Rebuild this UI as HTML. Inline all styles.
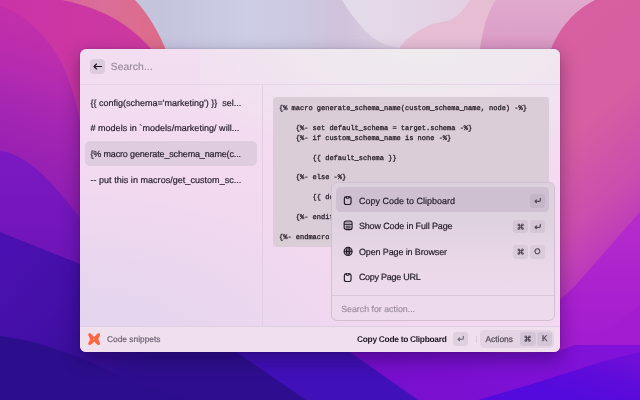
<!DOCTYPE html>
<html>
<head>
<meta charset="utf-8">
<style>
*{box-sizing:border-box;margin:0;padding:0}
html,body{width:640px;height:400px;overflow:hidden;background:#7a18c0}
body{font-family:"Liberation Sans",sans-serif;position:relative;text-rendering:geometricPrecision}
#bg{position:absolute;left:0;top:0;width:640px;height:400px}
#shadow{position:absolute;left:80px;top:49px;width:480px;height:303px;border-radius:6px;box-shadow:0 7px 18px 1px rgba(20,0,50,.36),0 0 2px rgba(20,0,50,.2)}
#win{filter:opacity(1);position:absolute;left:80px;top:49px;width:480px;height:303px;border-radius:6px;overflow:hidden;
 background:radial-gradient(ellipse 400px 230px at 0% 100%,rgba(226,212,238,1) 0%,rgba(230,213,238,.85) 35%,rgba(238,216,239,.4) 70%,rgba(243,218,240,0) 100%),linear-gradient(180deg,#f2def0 0%,#f3daf0 40%,#f3d9ef 100%)}
#rightwash{position:absolute;left:120px;top:0;width:360px;height:120px;background:radial-gradient(ellipse 260px 110px at 62% 0%,rgba(238,236,238,.95) 0%,rgba(238,236,238,.6) 50%,rgba(238,236,238,0) 100%)}
#hdr{position:absolute;left:0;top:0;width:480px;height:35px}
#hsep{position:absolute;left:0;top:35px;width:480px;height:1px;background:#e6d4e6}
#back{position:absolute;left:10px;top:10px;width:15px;height:15px;border-radius:4px;background:#dccbdc}
#back svg{position:absolute;left:0;top:0}
#search{-webkit-text-stroke:0.15px #978899;letter-spacing:0.08px;position:absolute;left:30.8px;top:12.4px;font-size:10.3px;line-height:13px;color:#978899;white-space:nowrap}
.li{-webkit-text-stroke:0.2px #2a2030;position:absolute;left:10.4px;font-size:9px;line-height:12px;color:#2a2030;white-space:nowrap}
#sel{position:absolute;left:5.4px;top:92.2px;width:171.6px;height:24.8px;border-radius:5px;background:#dfcddf}
#vsep{position:absolute;left:182px;top:36px;width:1px;height:241px;background:#e2d0e2}
#code{position:absolute;left:193px;top:48px;width:276px;height:150px;border-radius:3px;background:#dacdd8}
#code pre{position:absolute;left:6px;font-family:"Liberation Mono",monospace;font-size:7px;line-height:10px;color:#2a222c;-webkit-text-stroke:0.3px #2a222c}
#fsep{position:absolute;left:0;top:277px;width:480px;height:1px;background:#e0cfe4}
#foot{position:absolute;left:0;top:278px;width:480px;height:25px;background:#f0e0ee}
#dbt{position:absolute;left:7.6px;top:5.75px}
#ftitle{-webkit-text-stroke:0.2px #6e6272;position:absolute;left:27px;top:6.9px;font-size:8.4px;line-height:11px;color:#6e6272;white-space:nowrap}
#fact{position:absolute;left:277px;top:6.9px;font-size:8.4px;letter-spacing:-0.288px;line-height:11px;color:#1e1822;font-weight:bold;white-space:nowrap}
#fdiv{position:absolute;left:396.3px;top:9.2px;width:1px;height:6.6px;background:#d9c9da}
#abtn{position:absolute;left:400px;top:3.1px;width:74.4px;height:17.7px;border-radius:4.5px;background:#e3d3e3}
#atext{-webkit-text-stroke:0.25px #5a4f5e;position:absolute;left:405.5px;top:6.9px;font-size:8.4px;line-height:11px;color:#5a4f5e;white-space:nowrap}
#pop{position:absolute;left:251px;top:133px;width:224px;height:139px;border-radius:6px;border:1px solid #cfbfd0;
 background:linear-gradient(180deg,#ded1de 0,#dfd2df 40px,#e5d5e5 62px,#ead8e9 82px,#eddaec 110px,#eddaec 100%)}
#psel{position:absolute;left:4.2px;top:4.1px;width:213.2px;height:25px;border-radius:4.5px;background:#cec0d0}
.pa{-webkit-text-stroke:0.2px #241c28;position:absolute;left:26.9px;font-size:9px;line-height:12px;color:#241c28;white-space:nowrap}
.pi{position:absolute;left:11.1px}
#psep{position:absolute;left:0;top:111.6px;width:221.5px;height:1px;background:#d9c8da}
#psearch{-webkit-text-stroke:0.15px #9a8b9d;position:absolute;left:9.2px;top:121px;font-size:8.8px;line-height:11px;color:#9a8b9d;white-space:nowrap}
.k{position:absolute;width:15.3px;height:13.4px;border-radius:3px;background:#d5c6d6}
#pop .k{height:13.8px}
#pop .k svg,#pop .k div{top:0.2px}
.k svg{position:absolute;left:0;top:0}
.pa,.li,#atext,.k div,#fact,#ftitle,#search,#psearch,#code pre{filter:opacity(1)}
</style>
</head>
<body>
<svg id="bg" viewBox="0 0 640 400">
<defs>
<linearGradient id="gtop" x1="0" y1="0" x2="1" y2="0">
 <stop offset="0.25" stop-color="#c5c4dd"/><stop offset="0.39" stop-color="#cdcde5"/><stop offset="0.47" stop-color="#cdc8e1"/><stop offset="0.535" stop-color="#d0c2db"/><stop offset="0.62" stop-color="#dccfe2"/><stop offset="0.75" stop-color="#e2b4d0"/><stop offset="0.85" stop-color="#dea6cb"/>
</linearGradient>
<linearGradient id="gleft" gradientUnits="userSpaceOnUse" x1="80" y1="0" x2="0" y2="240">
 <stop offset="0" stop-color="#c631a7"/><stop offset="0.2" stop-color="#bf2eab"/><stop offset="0.35" stop-color="#b32bb0"/><stop offset="0.5" stop-color="#a426b2"/><stop offset="0.75" stop-color="#921fb3"/><stop offset="1" stop-color="#8019b4"/>
</linearGradient>
<linearGradient id="gband2" x1="0" y1="0" x2="1" y2="0">
 <stop offset="0" stop-color="#ca33a7"/><stop offset="1" stop-color="#cd3a9e"/>
</linearGradient>
<linearGradient id="gband3" x1="0" y1="0" x2="1" y2="0">
 <stop offset="0.1" stop-color="#d25a9c"/><stop offset="0.6" stop-color="#da6e98"/><stop offset="1" stop-color="#de6b89"/>
</linearGradient>
<linearGradient id="gviolet" x1="0" y1="0" x2="0" y2="1">
 <stop offset="0" stop-color="#7c19c2"/><stop offset="1" stop-color="#6a13b4"/>
</linearGradient>
<linearGradient id="gindigo" x1="0" y1="0" x2="1" y2="0.25">
 <stop offset="0" stop-color="#4c10b2"/><stop offset="0.18" stop-color="#440fa8"/><stop offset="0.4" stop-color="#2e0e8e"/>
</linearGradient>
<linearGradient id="gpink" x1="0" y1="0" x2="0.25" y2="1">
 <stop offset="0" stop-color="#d8609f"/><stop offset="0.45" stop-color="#d65ea1"/><stop offset="0.72" stop-color="#cb4dae"/><stop offset="0.92" stop-color="#b835c0"/>
</linearGradient>
<linearGradient id="gmag" x1="0" y1="0" x2="0" y2="1">
 <stop offset="0" stop-color="#b62ccb"/><stop offset="0.5" stop-color="#a820cf"/><stop offset="1" stop-color="#9a16d2"/>
</linearGradient>
<linearGradient id="gblue" gradientUnits="userSpaceOnUse" x1="600" y1="352" x2="585" y2="400"><stop offset="0" stop-color="#6e0ed8"/><stop offset="0.45" stop-color="#5e0bdb"/><stop offset="1" stop-color="#540adc"/></linearGradient>
<linearGradient id="gbowl" gradientUnits="userSpaceOnUse" x1="345" y1="0" x2="470" y2="0"><stop offset="0" stop-color="#e2dbea"/><stop offset="0.4" stop-color="#e3d8e8"/><stop offset="1" stop-color="#e3cfe2"/></linearGradient>
<linearGradient id="glilac" gradientUnits="userSpaceOnUse" x1="0" y1="0" x2="0" y2="52"><stop offset="0" stop-color="#e0a9cd"/><stop offset="0.6" stop-color="#dda1c9"/><stop offset="1" stop-color="#d895c2"/></linearGradient>
<linearGradient id="gbot" x1="0" y1="0" x2="1" y2="0">
 <stop offset="0" stop-color="#760ecb"/><stop offset="1" stop-color="#8212da"/>
</linearGradient>
</defs>
<rect width="640" height="400" fill="url(#gtop)"/>
<!-- top: whitish bowl + pink hill -->
<path d="M342 0C348 10 354 18 360 25 368 34 375 40 382 43 390 46 395 47 402 48L402 60 470 60 471 0Z" fill="url(#gbowl)"/>
<path d="M400 60L400 47C403 43 406 40 410 37 416 32 422 28 430 25 438 22 444 22 450 20 456 18 463 11 470 0L640 0 640 60Z" fill="#e6bdd3"/>
<path d="M480 48C484 22 490 8 496 0L640 0 640 80 480 80Z" fill="url(#glilac)"/>
<!-- left magenta family -->
<path d="M0 0L135 0C148 14 158 30 168 55L170 300 0 300Z" fill="url(#gband3)" />
<path d="M0 0L62 0C100 8 128 22 152 50L160 300 0 300Z" fill="url(#gband2)"/>
<path d="M0 6C25 14 45 34 60 60 68 76 74 92 79 115L100 300 0 300Z" fill="url(#gleft)"/>
<path d="M0 151C14 152 32 163 50 182 62 195 74 210 90 230L90 300 0 300Z" fill="url(#gviolet)"/>
<path d="M0 232L90 268 640 330 640 400 0 400Z" fill="url(#gindigo)"/>
<!-- right pink circle -->
<path d="M595 0C575 10 558 28 549 55 545 70 545 90 548 110L548 330 640 330 640 0Z" fill="url(#gpink)"/>
<path d="M640 212L574 287 540 317 540 400 640 400Z" fill="url(#gmag)"/>
<!-- bottom -->
<path d="M226 345L306 400 640 400 640 345Z" fill="#4010b8"/>
<path d="M340 345L418 400 640 400 640 345Z" fill="url(#gbot)"/>
<path d="M640 305C620 322 600 336 562 350 545 354 500 352 440 352L440 345 640 345Z" fill="#a41cd0"/>
<path d="M640 352C625 356 610 359 598 363 570 372 540 382 478 400L640 400Z" fill="url(#gblue)"/>
<path d="M0 336C15 338 30 341 40 344 55 349 68 353 80 358 95 364 110 371 122 377 140 385 158 391 188 400L0 400Z" fill="#2c0e8c"/>
</svg>
<div id="shadow"></div>
<div id="win">
 <div id="rightwash"></div>
 <div id="hsep"></div>
 <div id="back"><svg width="15" height="15" viewBox="0 0 15 15"><path d="M11.6 7.5H4M6.5 5L4 7.5l2.5 2.5" fill="none" stroke="#1c1620" stroke-width="1.15" stroke-linecap="round" stroke-linejoin="round"/></svg></div>
 <div id="search">Search...</div>
 <div id="sel"></div>
 <div class="li" id="l1" style="top:47.5px">{{ config(schema='marketing') }}&nbsp; sel...</div>
 <div class="li" id="l2" style="top:73.3px;letter-spacing:0.038px">#&nbsp;models in `models/marketing/ will...</div>
 <div class="li" id="l3" style="top:99.1px;letter-spacing:-0.15px">{% macro generate_schema_name(c...</div>
 <div class="li" id="l4" style="top:124.9px;letter-spacing:0.038px">-- put this in macros/get_custom_sc...</div>
 <div id="vsep"></div>
 <div id="code"><pre style="top:7px">{% macro generate_schema_name(custom_schema_name, node) -%}

    {%- set default_schema = target.schema -%}
    {%- if custom_schema_name is none -%}

        {{ default_schema }}
</pre><pre style="top:76px">    {%- else -%}

        {{ default_schema }}_{{ custom_schema_name | trim }}

    {%- endif -%}

{%- endmacro %}</pre></div>
 <div id="fsep"></div>
 <div id="foot">
  <svg id="dbt" width="12.3" height="12.3" viewBox="0 0 12.3 12.3"><path d="M1.2 0.3C2.2 0.1 3.2 0.8 4.2 1.9L6.15 3.9 8.1 1.9C9.1 0.8 10.1 0.1 11.1 0.3 12.1 0.6 12.3 1.6 11.9 2.5 11.4 3.6 10.6 4.6 10.4 6.15 10.6 7.7 11.4 8.7 11.9 9.8 12.3 10.7 12.1 11.7 11.1 12 10.1 12.2 9.1 11.5 8.1 10.4L6.15 8.6 4.2 10.4C3.2 11.5 2.2 12.2 1.2 12 0.2 11.7 0 10.7 0.4 9.8 0.9 8.7 1.7 7.7 1.9 6.15 1.7 4.6 0.9 3.6 0.4 2.5 0 1.6 0.2 0.6 1.2 0.3Z" fill="#ff643c"/><circle cx="5.8" cy="6.25" r="0.65" fill="#f7cdd6"/></svg>
  <div id="ftitle">Code snippets</div>
  <div id="fact">Copy Code to Clipboard</div>
  <div class="k" style="left:373.1px;top:5.3px;background:#dfd0df"><svg width="15.3" height="13.4" viewBox="0 0 15.3 13.4"><path d="M10.3 4.3V6.5Q10.3 7.3 9.5 7.3H5.1M6.5 5.9L5 7.3 6.5 8.7" fill="none" stroke="#6a5e6e" stroke-width="1.05" stroke-linecap="round" stroke-linejoin="round"/></svg></div>
  <div id="fdiv"></div>
  <div id="abtn"></div>
  <div id="atext">Actions</div>
  <div class="k" style="left:440.3px;top:5.3px;background:#d3c5d5"><svg width="15.3" height="13.4" viewBox="0 0 15.3 13.4"><g transform="translate(4.7,3.75) scale(0.92)" fill="none" stroke="#4e4454" stroke-width="1.1"><path d="M2.1 2.1H4.3V4.3H2.1Z"/><path d="M2.1 2.1V1.25A0.9 0.9 0 1 0 1.2 2.1Z"/><path d="M4.3 2.1H5.2A0.9 0.9 0 1 0 4.3 1.25Z"/><path d="M4.3 4.3V5.2A0.9 0.9 0 1 0 5.2 4.3Z"/><path d="M2.1 4.3H1.2A0.9 0.9 0 1 0 2.1 5.2Z"/></g></svg></div>
  <div class="k" style="left:457px;top:5.3px;background:#d3c5d5"><div style="position:absolute;left:0;top:0;width:15.3px;height:13.4px;text-align:center;font-size:8px;line-height:14.4px;color:#52475a;-webkit-text-stroke:0.35px #52475a">K</div></div>
 </div>
 <div id="pop">
  <div id="psel"></div>
  <svg class="pi" style="top:12.0px" width="10" height="11" viewBox="0 0 10 11"><rect x="1.35" y="1.9" width="6.7" height="7.6" rx="1.7" fill="none" stroke="#1e1822" stroke-width="1.15"/><path d="M2.9 1H6.5V2.7Q6.5 3.7 5.5 3.7H3.9Q2.9 3.7 2.9 2.7Z" fill="#1e1822"/><circle cx="4.7" cy="2.2" r="0.7" fill="#cec0d0"/></svg>
  <svg class="pi" style="top:36.8px" width="10" height="11" viewBox="0 0 10 11"><rect x="1.15" y="1.15" width="7.9" height="8.4" rx="2" fill="none" stroke="#1e1822" stroke-width="1.15"/><path d="M1.2 4.3H9" stroke="#1e1822" stroke-width="1"/><rect x="2.6" y="5.5" width="5" height="3.2" rx="0.5" fill="#6a5e6c"/><rect x="1.7" y="1.7" width="6.8" height="2.2" rx="1.2" fill="#a79ba9"/></svg>
  <svg class="pi" style="top:62.8px" width="10" height="11" viewBox="0 0 10 11"><circle cx="5.1" cy="5.4" r="4" fill="#8d8090" fill-opacity="0.55" stroke="#1e1822" stroke-width="1.15"/><ellipse cx="5.1" cy="5.4" rx="1.7" ry="4" fill="#e4d4e4" stroke="#1e1822" stroke-width="1"/><path d="M1.1 5.4H9.1M5.1 1.4V9.4" stroke="#1e1822" stroke-width="1" fill="none"/></svg>
  <svg class="pi" style="top:88.7px" width="10" height="11" viewBox="0 0 10 11"><rect x="1.35" y="1.9" width="6.7" height="7.6" rx="1.7" fill="none" stroke="#1e1822" stroke-width="1.15"/><path d="M2.9 1H6.5V2.7Q6.5 3.7 5.5 3.7H3.9Q2.9 3.7 2.9 2.7Z" fill="#1e1822"/><circle cx="4.7" cy="2.2" r="0.7" fill="#ebd9ea"/></svg>
  <div class="pa" id="a1" style="top:12.2px">Copy Code to Clipboard</div>
  <div class="pa" id="a2" style="top:36.7px;letter-spacing:-0.139px">Show Code in Full Page</div>
  <div class="pa" id="a3" style="top:62.7px;letter-spacing:-0.128px">Open Page in Browser</div>
  <div class="pa" id="a4" style="top:87.9px;letter-spacing:-0.273px">Copy Page URL</div>
  <div class="k" style="left:197.6px;top:11.1px;background:#c4b6c6"><svg width="15.3" height="13.4" viewBox="0 0 15.3 13.4"><path d="M10.3 4.3V6.5Q10.3 7.3 9.5 7.3H5.1M6.5 5.9L5 7.3 6.5 8.7" fill="none" stroke="#54495a" stroke-width="1.2" stroke-linecap="round" stroke-linejoin="round"/></svg></div>
  <div class="k" style="left:180.6px;top:36.7px"><svg width="15.3" height="13.4" viewBox="0 0 15.3 13.4"><g transform="translate(4.7,3.75) scale(0.92)" fill="none" stroke="#54495a" stroke-width="1.1"><path d="M2.1 2.1H4.3V4.3H2.1Z"/><path d="M2.1 2.1V1.25A0.9 0.9 0 1 0 1.2 2.1Z"/><path d="M4.3 2.1H5.2A0.9 0.9 0 1 0 4.3 1.25Z"/><path d="M4.3 4.3V5.2A0.9 0.9 0 1 0 5.2 4.3Z"/><path d="M2.1 4.3H1.2A0.9 0.9 0 1 0 2.1 5.2Z"/></g></svg></div><div class="k" style="left:197.6px;top:36.7px"><svg width="15.3" height="13.4" viewBox="0 0 15.3 13.4"><path d="M10.3 4.3V6.5Q10.3 7.3 9.5 7.3H5.1M6.5 5.9L5 7.3 6.5 8.7" fill="none" stroke="#54495a" stroke-width="1.2" stroke-linecap="round" stroke-linejoin="round"/></svg></div>
  <div class="k" style="left:180.6px;top:62.3px;background:#dacbdb"><svg width="15.3" height="13.4" viewBox="0 0 15.3 13.4"><g transform="translate(4.7,3.75) scale(0.92)" fill="none" stroke="#54495a" stroke-width="1.1"><path d="M2.1 2.1H4.3V4.3H2.1Z"/><path d="M2.1 2.1V1.25A0.9 0.9 0 1 0 1.2 2.1Z"/><path d="M4.3 2.1H5.2A0.9 0.9 0 1 0 4.3 1.25Z"/><path d="M4.3 4.3V5.2A0.9 0.9 0 1 0 5.2 4.3Z"/><path d="M2.1 4.3H1.2A0.9 0.9 0 1 0 2.1 5.2Z"/></g></svg></div><div class="k" style="left:197.6px;top:62.3px;background:#dacbdb"><div style="position:absolute;left:0;top:0;width:15.3px;height:13.4px;text-align:center;font-size:8px;line-height:14.4px;color:#52475a;-webkit-text-stroke:0.35px #52475a">O</div></div>
  <div id="psep"></div>
  <div id="psearch">Search for action...</div>
 </div>
</div>
</body>
</html>
